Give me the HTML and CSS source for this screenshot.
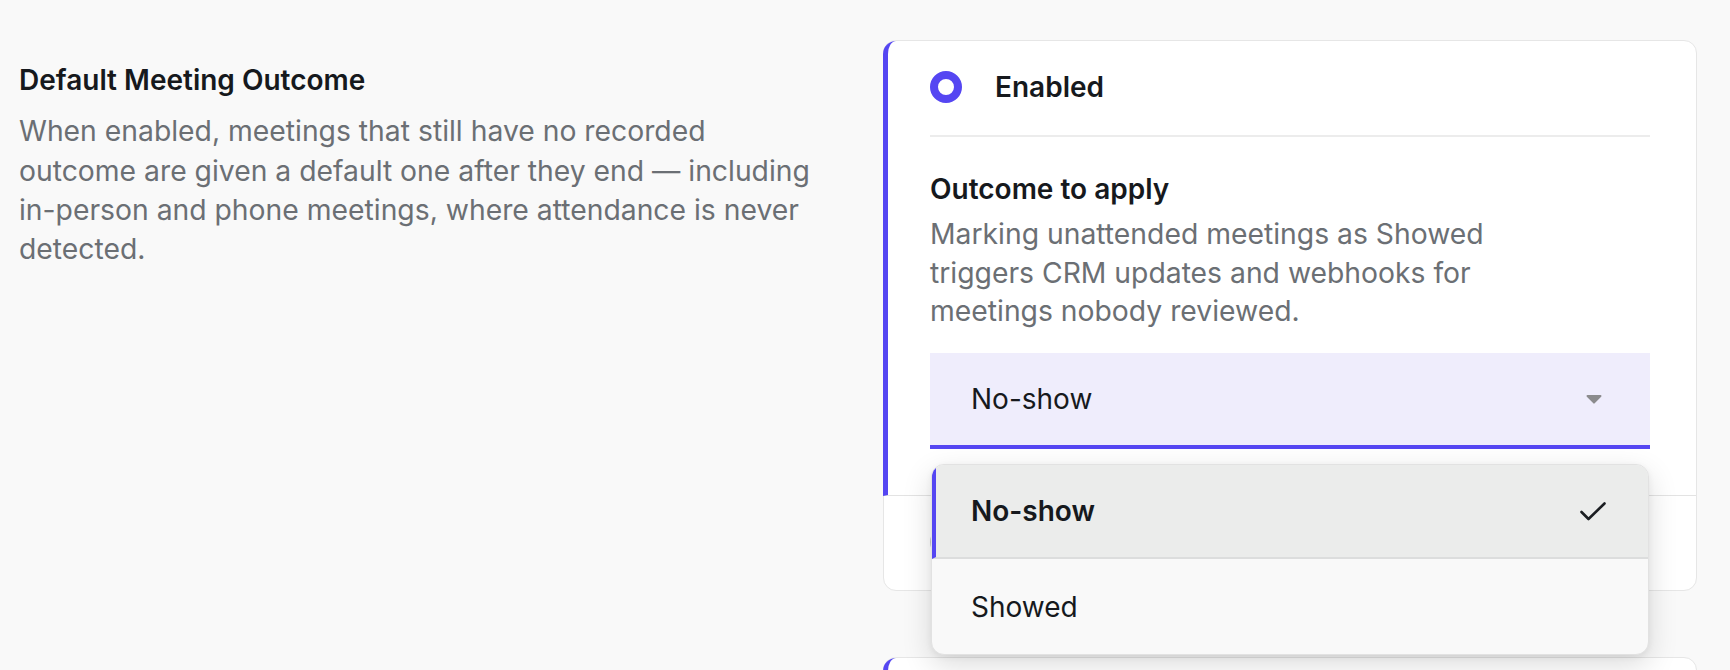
FILE: index.html
```html
<!DOCTYPE html>
<html lang="en">
<head>
    <meta charset="UTF-8">
    <meta name="viewport" content="width=device-width, initial-scale=1.0">
    <title>Meeting Settings</title>
    <link rel="stylesheet" href="styles.css">
</head>
<body>
    <div class="settings">
        <div class="setting">
            <div class="setting-info">
                <h2>Default Meeting Outcome</h2>
                <p>When enabled, meetings that still have no recorded outcome are given a default one after they end — including in-person and phone meetings, where attendance is never detected.</p>
            </div>
            <div class="card">
                <div class="option selected">
                    <label class="option-head">
                        <span class="radio checked"></span>
                        <span class="option-label">Enabled</span>
                    </label>
                    <div class="option-body">
                        <h3>Outcome to apply</h3>
                        <p>Marking unattended meetings as Showed triggers CRM updates and webhooks for meetings nobody reviewed.</p>
                        <div class="select open">
                            <div class="select-field">
                                <span>No-show</span>
                                <svg class="caret" width="16" height="10" viewBox="0 0 16 10">
                                    <path d="M1.5 1h13a1 1 0 0 1 .7 1.7l-6.5 6.6a1 1 0 0 1-1.4 0L.8 2.7A1 1 0 0 1 1.5 1z" fill="#8b8b8d"/>
                                </svg>
                            </div>
                            <ul class="select-menu">
                                <li class="active">
                                    <span>No-show</span>
                                    <svg class="check" width="26" height="19" viewBox="0 0 26 19">
                                        <polyline points="1.5,10 8.5,17 24.5,1.5" fill="none" stroke="#1b1e22" stroke-width="2.6" stroke-linecap="round" stroke-linejoin="round"/>
                                    </svg>
                                </li>
                                <li>Showed</li>
                            </ul>
                        </div>
                    </div>
                </div>
                <div class="option">
                    <label class="option-head">
                        <span class="radio"></span>
                        <span class="option-label">Disabled</span>
                    </label>
                </div>
            </div>
        </div>

        <div class="setting">
            <div class="setting-info">
                <h2>Attendance Detection</h2>
                <p>Mark meetings automatically once attendance is detected.</p>
            </div>
            <div class="card">
                <div class="option selected">
                    <label class="option-head">
                        <span class="radio checked"></span>
                        <span class="option-label">Enabled</span>
                    </label>
                </div>
                <div class="option">
                    <label class="option-head">
                        <span class="radio"></span>
                        <span class="option-label">Disabled</span>
                    </label>
                </div>
            </div>
        </div>
    </div>
</body>
</html>
```

FILE: styles.css
```css
* {
    box-sizing: border-box;
}
body {
    margin: 0;
    background: #f9f9f9;
    color: #16191d;
    font-family: Inter, "Noto Sans", sans-serif;
    font-size: 28px;
}
.settings {
    padding: 40px 33px 0 19px;
}
.setting {
    display: flex;
    gap: 64px;
    margin-bottom: 66px;
}
.setting-info {
    width: 800px;
    flex-shrink: 0;
    padding-top: 21px;
}
.setting-info h2 {
    margin: 0 0 13px;
    font-size: 28px;
    font-weight: 600;
    line-height: 38.4px;
}
.setting-info p {
    margin: 0;
    color: #6b6f74;
    font-size: 28.3px;
    line-height: 39.3px;
}

.card {
    flex: 1;
    background: #fff;
    border: 1px solid #e6e6e6;
    border-radius: 13px;
}
.option {
    padding: 0 46px;
    border-bottom: 1px solid #e3e3e3;
}
.option:last-child {
    border-bottom: none;
}
.option.selected {
    margin-left: -1px;
    padding-left: 42px;
    border-left: 5px solid #5546f2;
    border-top-left-radius: 13px;
}
.option-head {
    display: flex;
    align-items: center;
    gap: 33px;
    padding: 30px 0 32px;
    cursor: pointer;
}
.option.selected .option-head {
    border-bottom: 2px solid #ececec;
}
.radio {
    width: 32px;
    height: 32px;
    flex-shrink: 0;
    border-radius: 50%;
    border: 3px solid #c9cacd;
    background: #fff;
}
.radio.checked {
    border: 8px solid #5546f2;
}
.option-label {
    font-weight: 600;
    line-height: 32px;
}

.option-body {
    padding: 33px 0 46px;
}
.option-body h3 {
    margin: 0 0 7px;
    font-size: 28px;
    font-weight: 600;
    line-height: 38.4px;
}
.option-body p {
    margin: 0;
    max-width: 576px;
    color: #6b6f74;
    font-size: 28.3px;
    line-height: 38.5px;
}

.select {
    position: relative;
    margin-top: 22.5px;
}
.select-field {
    height: 96px;
    display: flex;
    align-items: center;
    justify-content: space-between;
    padding: 0 48px 0 41px;
    background: #efedfc;
    border-bottom: 4px solid #5546f2;
    cursor: pointer;
}
.select-menu {
    position: absolute;
    top: calc(100% + 15px);
    left: 1px;
    right: 1px;
    z-index: 10;
    margin: 0;
    padding: 0;
    list-style: none;
    background: #f9f9f9;
    border: 1px solid #e2e2e2;
    border-radius: 13px;
    overflow: hidden;
    box-shadow: 0 10px 30px rgba(0, 0, 0, 0.14), 0 2px 6px rgba(0, 0, 0, 0.06);
}
.select-menu li {
    height: 95px;
    display: flex;
    align-items: center;
    justify-content: space-between;
    padding: 0 42px 0 39px;
}
.select-menu li.active {
    height: 94px;
    padding-left: 35px;
    background: #ebeceb;
    border-left: 4px solid #5546f2;
    border-bottom: 2px solid #dcdddd;
    font-weight: 600;
}
```
